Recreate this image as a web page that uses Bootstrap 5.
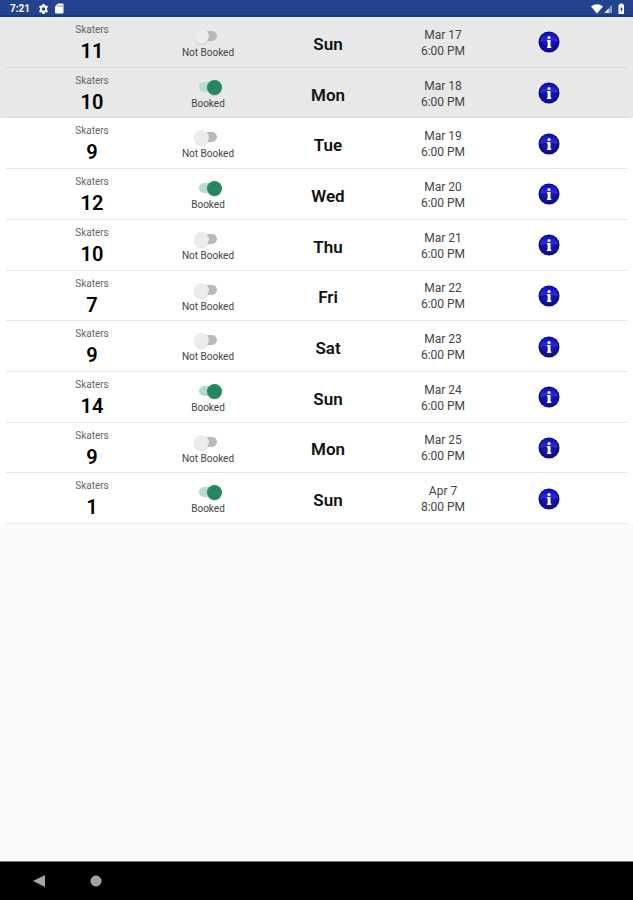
<!DOCTYPE html>
<html lang="en">
<head>
<meta charset="utf-8">
<meta name="viewport" content="width=device-width, initial-scale=1">
<title>Skating sessions</title>
<link href="https://cdn.jsdelivr.net/npm/bootstrap@5.3.0/dist/css/bootstrap.min.css" rel="stylesheet">
<style>
body { font-family: Roboto, "Noto Sans", sans-serif; background: #fafafa; color: #111; }
.status-bar { height: 17px; background: #23448c; border-bottom: 2px solid #123a86; padding: 0 8px 0 10px; }
.clock { font-size: 10px; line-height: 14px; font-weight: 700; padding-top: 2px; }
.glyphs { padding-top: 2px; }
.sessions { display: grid; grid-auto-rows: 1fr; min-height: 507px; background: #fff; }
.session { padding: 0 5px 0 6px; }
.session.past { background: #e8e8e8; }
.session-grid { height: 100%; display: grid; grid-template-columns: 116fr 116fr 124fr 106fr 106fr; padding: 0 26px 0 28px; border-bottom: 1px solid #e6e6e6; }
.past .session-grid { border-color: #d8d8d8; }
.caption { font-size: 10px; line-height: 12px; color: #666; }
.skaters { padding-top: 7px; }
.total { font-size: 20px; line-height: 24px; font-weight: 600; margin-top: 3px; color: #000; }
.booking { padding-top: 12px; }
.booking .caption { margin-top: 4px; color: #444; }
.day { font-size: 17px; line-height: 20px; font-weight: 600; padding-top: 4px; }
.when { font-size: 12px; line-height: 16px; color: #444; padding-top: 2px; }
.toggle { appearance: none; position: relative; width: 28px; height: 14px; margin: 0; cursor: pointer; }
.toggle::before { content: ""; position: absolute; inset: 2px 5px; border-radius: 5px; background: #b9b9b9; }
.toggle::after { content: ""; position: absolute; left: 0; top: 0; width: 15px; height: 15px; border-radius: 50%; background: #ececec; box-shadow: 0 1px 1px #0002; }
.toggle:checked::before { background: #b5dccd; }
.toggle:checked::after { left: auto; right: 0; background: #23875f; }
.info-btn { padding: 1px 0 0; }
.info { width: 22px; height: 22px; }
.nav-keys { height: 39px; background: #000; border-top: 1px solid #777; padding-left: 31px; gap: 41px; }
</style>
<script src="https://cdn.jsdelivr.net/npm/bootstrap@5.3.0/dist/js/bootstrap.bundle.min.js"></script>
</head>
<body class="d-flex flex-column min-vh-100">
<header class="status-bar d-flex align-items-center justify-content-between text-white">
  <div class="d-flex align-items-center">
    <span class="clock">7:21</span>
    <div class="glyphs d-flex align-items-center gap-1 ms-2">
      <svg width="11" height="12" viewBox="0 0 24 24" fill="#fff" aria-hidden="true"><path fill-rule="evenodd" d="M9.800 1h4.400l.6 3 2 1.100 2.900-1 2.200 3.800L19.600 10v4l2.300 2.100-2.200 3.800-2.900-1-2 1.100-.6 3H9.800l-.6-3-2-1.100-2.900 1-2.200-3.800L4.400 14v-4L2.100 7.900l2.200-3.800 2.900 1 2-1.100zM12 8a4 4 0 1 0 0 8 4 4 0 0 0 0-8z"/></svg>
      <svg width="12" height="11" viewBox="0 0 22 22" aria-hidden="true"><path fill="#fff" d="M9 1h9q2 0 2 2v16q0 2-2 2H5q-2 0-2-2V7z"/><path stroke="#8395bd" stroke-width="2" d="M9 4v4M13 4v4M17 4v4"/></svg>
    </div>
  </div>
  <div class="glyphs d-flex align-items-center">
    <svg width="12" height="10" viewBox="0 0 24 20" fill="#fff" aria-hidden="true"><path d="M0 5Q12-4 24 5L12 19z"/></svg>
    <svg width="11" height="10" viewBox="0 0 22 20" aria-hidden="true"><path fill="#8799c2" d="M18 2v16H3z"/><path fill="#fff" d="M11 9v9H3z"/></svg>
    <svg class="ms-1" width="7" height="12" viewBox="0 0 14 24" aria-hidden="true"><path fill="#fff" d="M4 1h5v2h3v19H1V3h3z"/><path fill="#23448c" d="M8 7l-4 6h2v5l4-7H8z"/></svg>
  </div>
</header>

<main class="flex-grow-1">
  <ul class="sessions list-unstyled mb-0" id="sessions"></ul>
</main>

<nav class="nav-keys d-flex align-items-center" aria-label="System">
  <button class="btn p-0 border-0 d-flex" type="button" aria-label="Back"><svg width="14" height="14" viewBox="0 0 14 14"><path fill="#a5a5a5" d="M14 1v12L2 7z"/></svg></button>
  <button class="btn p-0 border-0 d-flex" type="button" aria-label="Home"><svg width="20" height="14" viewBox="0 0 20 14"><circle cx="10" cy="7" r="5" fill="#a0a0a0" stroke="#b5b5b5"/></svg></button>
</nav>

<svg width="0" height="0" class="position-absolute" aria-hidden="true">
  <defs>
    <radialGradient id="ball" cx=".5" cy=".5" r=".5"><stop offset="0" stop-color="#2222b4"/><stop offset=".75" stop-color="#0d0da8"/><stop offset="1" stop-color="#08086e"/></radialGradient>
    <linearGradient id="gloss" x2="0" y2="1"><stop offset="0" stop-color="#0808e0"/><stop offset="1" stop-color="#3434c8"/></linearGradient>
    <symbol id="info-ball" viewBox="0 0 22 22">
      <circle cx="11" cy="11" r="10.500" fill="url(#ball)"/>
      <path fill="url(#gloss)" d="M2 11a9 9.500 0 0 1 18 0Q11 8 2 11z"/>
      <circle cx="11" cy="6.500" r="1.600" fill="#fff"/>
      <path fill="#fff" d="M9 9h3.500v6.500h.8V17H9v-1.500h.7v-5H9z"/>
    </symbol>
  </defs>
</svg>

<script>
const sessions = [
  [11, false, "Sun", "Mar 17", "6:00 PM", true],
  [10, true, "Mon", "Mar 18", "6:00 PM", true],
  [9, false, "Tue", "Mar 19", "6:00 PM"],
  [12, true, "Wed", "Mar 20", "6:00 PM"],
  [10, false, "Thu", "Mar 21", "6:00 PM"],
  [7, false, "Fri", "Mar 22", "6:00 PM"],
  [9, false, "Sat", "Mar 23", "6:00 PM"],
  [14, true, "Sun", "Mar 24", "6:00 PM"],
  [9, false, "Mon", "Mar 25", "6:00 PM"],
  [1, true, "Sun", "Apr 7", "8:00 PM"]
];
document.getElementById("sessions").innerHTML = sessions.map(([total, booked, day, date, time, past], i) => `
  <li class="session ${past ? "past" : ""}">
    <div class="session-grid text-center">
      <div class="skaters"><div class="caption">Skaters</div><div class="total">${total}</div></div>
      <div class="booking d-flex flex-column align-items-center">
        <input class="toggle" type="checkbox" role="switch" id="booked${i}" ${booked ? "checked" : ""}>
        <label class="caption" for="booked${i}">${booked ? "Booked" : "Not Booked"}</label>
      </div>
      <div class="day align-self-center">${day}</div>
      <div class="when align-self-center"><div>${date}</div><div>${time}</div></div>
      <button class="info-btn btn border-0 d-flex align-self-center mx-auto" type="button" aria-label="Details for ${date}"><svg class="info"><use href="#info-ball"/></svg></button>
    </div>
  </li>`).join("");
document.querySelectorAll(".toggle").forEach(box => box.addEventListener("change", () => {
  box.nextElementSibling.textContent = box.checked ? "Booked" : "Not Booked";
}));
</script>
</body>
</html>
